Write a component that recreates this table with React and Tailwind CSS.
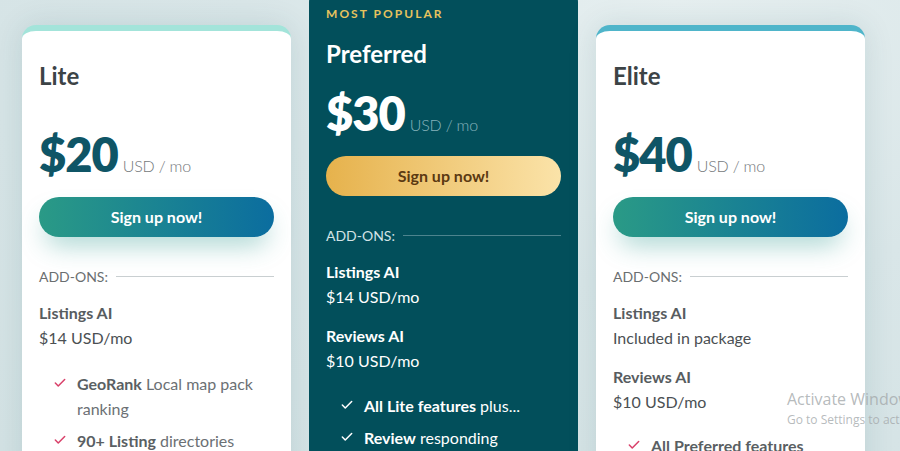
import React from "react";
import { Check } from "lucide-react";

const font = { fontFamily: "Lato, 'Open Sans', sans-serif" };

function AddonsLabel({ dark }) {
  return (
    <div className="flex items-center gap-[8px] h-[20px]">
      <span className={`text-[14px] ${dark ? "text-[#d3e3e6]" : "text-[#6a6e70]"}`}>ADD-ONS:</span>
      <span className={`flex-1 h-px ${dark ? "bg-[#4d848e]" : "bg-[#c9cfd1]"}`} />
    </div>
  );
}

function Addon({ name, price, dark }) {
  return (
    <div className="text-[16px] leading-[25px]">
      <div className={`font-bold ${dark ? "text-white" : "text-[#575c60]"}`}>{name}</div>
      <div className={dark ? "text-white" : "text-[#4b5053]"}>{price}</div>
    </div>
  );
}

function Feature({ bold, rest, dark }) {
  return (
    <li className="flex items-start">
      <span className="w-[38px] pl-[14px] pt-[5px] shrink-0">
        <Check size={14} strokeWidth={2.6} className={dark ? "text-white" : "text-[#d9416a]"} />
      </span>
      <span className={`text-[16px] leading-[25px] ${dark ? "text-white" : "text-[#6b7074]"}`}>
        <b className={dark ? "text-white" : "text-[#5a5f63]"}>{bold}</b>
        {rest ? " " + rest : ""}
      </span>
    </li>
  );
}

function PlanCard({ title, price, strip, addons, features, gapToList }) {
  return (
    <div
      className={`w-[269px] shrink-0 mt-[25px] bg-white rounded-t-[14px] border-t-[6px] ${strip} h-[520px] px-[17px] pt-[29px] shadow-[0_0_30px_rgba(0,70,80,0.12)]`}
    >
      <h2 className="text-[24px] leading-[32px] font-bold text-[#3c4346]">{title}</h2>
      <div className="mt-[39px] flex items-baseline h-[46px]">
        <span className="text-[47px] leading-[46px] font-extrabold text-[#0f5566] tracking-[-1px]">{price}</span>
        <span className="ml-[5px] text-[16px] font-light text-[#74787b] tracking-[-0.2px]">USD / mo</span>
      </div>
      <button className="mt-[20px] w-full h-[40px] rounded-full bg-[linear-gradient(90deg,#2a9a86,#0b6d9f)] text-white font-bold text-[16px] shadow-[0_14px_26px_-6px_rgba(40,150,140,0.4)]">
        Sign up now!
      </button>
      <div className="mt-[29px]">
        <AddonsLabel />
      </div>
      <div className="mt-[14px] flex flex-col gap-[14px]">
        {addons.map((a) => (
          <Addon key={a.name} name={a.name} price={a.price} />
        ))}
      </div>
      <ul className={`flex flex-col gap-[7px] ${gapToList}`}>
        {features.map((f) => (
          <Feature key={f.bold} bold={f.bold} rest={f.rest} />
        ))}
      </ul>
    </div>
  );
}

export default function App() {
  return (
    <div
      className="relative h-[451px] w-[900px] overflow-hidden bg-[radial-gradient(ellipse_at_75%_0%,#e6eff0_0%,#d9e6e8_45%,#d3e2e4_100%)]"
      style={font}
    >
      <div className="flex items-start gap-[18px] pl-[22px]">
        <PlanCard
          title="Lite"
          price="$20"
          strip="border-[#a3e4da]"
          addons={[{ name: "Listings AI", price: "$14 USD/mo" }]}
          gapToList="mt-[21px]"
          features={[
            { bold: "GeoRank", rest: "Local map pack ranking" },
            { bold: "90+ Listing", rest: "directories" },
          ]}
        />

        {/* featured plan */}
        <div className="w-[269px] shrink-0 -mt-[12px] h-[520px] rounded-t-[14px] bg-[#024f5b] px-[17px] pt-[18px]">
          <div className="text-[12px] leading-[16px] font-bold tracking-[0.17em] text-[#e7c35e]">MOST POPULAR</div>
          <h2 className="mt-[16px] text-[24px] leading-[32px] font-bold text-white">Preferred</h2>
          <div className="mt-[20px] flex items-baseline h-[46px]">
            <span className="text-[47px] leading-[46px] font-extrabold text-white tracking-[-1px]">$30</span>
            <span className="ml-[5px] text-[16px] font-light text-[#86b3bb] tracking-[-0.2px]">USD / mo</span>
          </div>
          <button className="mt-[20px] w-full h-[40px] rounded-full bg-[linear-gradient(90deg,#e6b24c,#fbe3a9)] text-[#5b3912] font-bold text-[16px]">
            Sign up now!
          </button>
          <div className="mt-[29px]">
            <AddonsLabel dark />
          </div>
          <div className="mt-[14px] flex flex-col gap-[14px]">
            <Addon dark name="Listings AI" price="$14 USD/mo" />
            <Addon dark name="Reviews AI" price="$10 USD/mo" />
          </div>
          <ul className="mt-[20px] flex flex-col gap-[7px]">
            <Feature dark bold="All Lite features" rest="plus..." />
            <Feature dark bold="Review" rest="responding" />
          </ul>
        </div>

        <PlanCard
          title="Elite"
          price="$40"
          strip="border-[#4fb5ca]"
          addons={[
            { name: "Listings AI", price: "Included in package" },
            { name: "Reviews AI", price: "$10 USD/mo" },
          ]}
          gapToList="mt-[19px]"
          features={[{ bold: "All Preferred features", rest: "" }]}
        />
      </div>

      {/* OS watermark */}
      <div className="absolute left-[787px] top-[388px] whitespace-nowrap text-[#a4a9ab]/80" style={{ fontFamily: "'Open Sans', sans-serif" }}>
        <div className="text-[16px] leading-[23px]">Activate Windows</div>
        <div className="text-[12px] leading-[18px]">Go to Settings to activate Windows.</div>
      </div>
    </div>
  );
}
